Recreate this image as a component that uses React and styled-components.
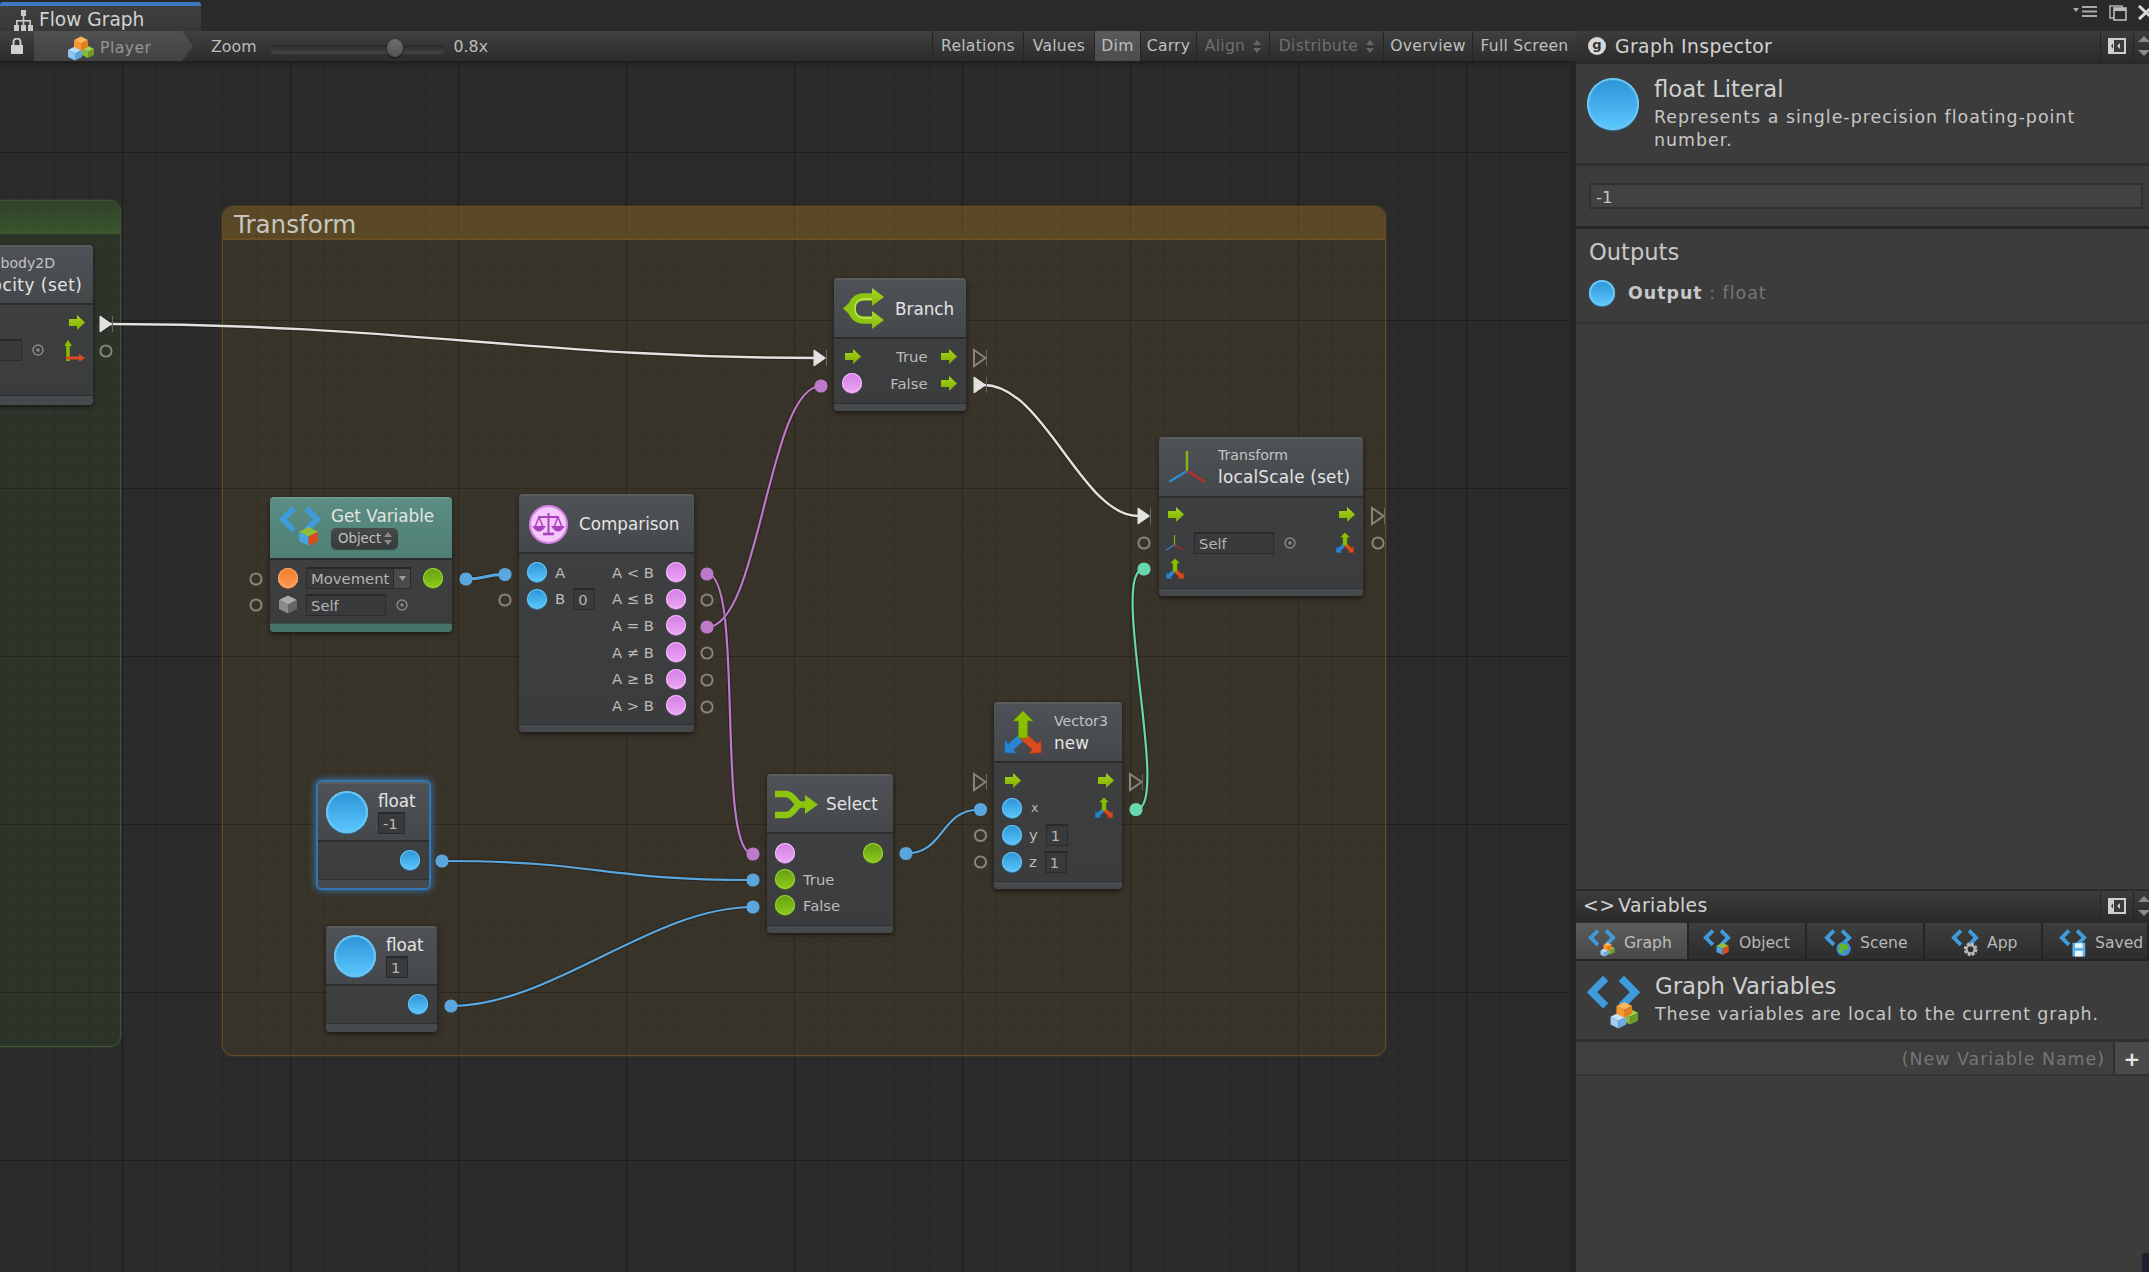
import React from "react";
import styled, { createGlobalStyle } from "styled-components";

const FONT = `"DejaVu Sans", "Liberation Sans", sans-serif`;
const CANVAS_TOP = 61;

const Global = createGlobalStyle`
  html, body { margin: 0; padding: 0; background: #2a2a2a; overflow: hidden; }
  * { box-sizing: border-box; }
  body { font-family: ${FONT}; }
`;

/* ---------- window chrome ---------- */
const Window = styled.div`
  width: 2149px; height: 1272px; display: flex; flex-direction: column; overflow: hidden; position: relative;
  font-family: ${FONT}; color: #c8c8c8;
`;
const TitleBar = styled.div`
  height: 31px; flex: none; display: flex; align-items: flex-end; justify-content: space-between;
  background: #2a2a2a;
`;
const TitleTab = styled.div`
  width: 201px; height: 29px; display: flex; align-items: center; gap: 6px; padding: 3px 0 0 14px;
  border-top: 4px solid #3d78c2; border-radius: 3px 3px 0 0;
  background: linear-gradient(180deg, #3f3f3f, #383838);
  font-size: 18.6px; color: #d2d2d2; line-height: 1;
`;
const WindowControls = styled.div`
  display: flex; align-items: flex-start; height: 31px; padding-top: 5px; margin-right: -6px; gap: 10px;
`;
const Main = styled.div` flex: 1; display: flex; min-height: 0; `;
const GraphColumn = styled.div` width: 1576px; flex: none; display: flex; flex-direction: column; `;

/* ---------- toolbar ---------- */
const Toolbar = styled.div`
  height: 30px; flex: none; display: flex; align-items: stretch;
  background: linear-gradient(180deg, #404040, #2c2c2c);
  font-size: 15.8px; color: #bcbcbc;
`;
const LockSlot = styled.div` width: 34px; flex: none; display: flex; align-items: center; padding-left: 10px; `;
const Breadcrumb = styled.div`
  width: 159px; flex: none; display: flex; align-items: center; gap: 6px; padding-left: 34px;
  background: linear-gradient(180deg, #505050, #424242);
  clip-path: polygon(0 0, 148px 0, 100% 50%, 148px 100%, 0 100%);
  color: #969696; font-size: 15.6px; letter-spacing: .5px; padding-top: 4px;
`;
const ToolLabel = styled.div` display: flex; align-items: center; margin-left: ${p => p.$ml}px; `;
const ZoomTrack = styled.div`
  width: 175px; height: 9px; margin: 14px 0 0 13px; flex: none; position: relative; border-radius: 5px;
  background: linear-gradient(180deg, #2a2a2a, #454545);
`;
const ZoomThumb = styled.div`
  position: absolute; left: 117px; top: -6px; width: 16px; height: 18px; border-radius: 50%;
  background: linear-gradient(180deg, #6e6e6e, #525252); box-shadow: 0 1px 2px rgba(0,0,0,.6);
`;
const ToolSpacer = styled.div` flex: 1; `;
const ToolButton = styled.div`
  width: ${p => p.$w}px; flex: none; display: flex; align-items: center; justify-content: center; gap: 8px;
  border-left: 1px solid #252525;
  color: ${p => (p.$disabled ? "#6f6f6f" : "#bfbfbf")};
  background: ${p => (p.$active ? "linear-gradient(180deg,#5a5a5a,#4c4c4c)" : "transparent")};
  font-size: 15.6px; letter-spacing: .25px;
`;

/* ---------- canvas ---------- */
const Canvas = styled.div`
  flex: 1; position: relative; overflow: hidden; border-right: 6px solid #242424;
  background-color: #2b2b2b;
  background-image:
    linear-gradient(90deg, rgba(0,0,0,.24) 1px, transparent 1px),
    linear-gradient(180deg, rgba(0,0,0,.24) 1px, transparent 1px),
    linear-gradient(90deg, rgba(0,0,0,.11) 1px, transparent 1px),
    linear-gradient(180deg, rgba(0,0,0,.11) 1px, transparent 1px);
  background-size: 168px 168px, 168px 168px, 16.8px 16.8px, 16.8px 16.8px;
  background-position: 122px 91px, 122px 91px, 122px 91px, 122px 91px;
  &::before { content: ""; position: absolute; inset: 0 0 auto 0; height: 6px; background: linear-gradient(180deg, rgba(0,0,0,.3), transparent); }
`;
const Group = styled.div`
  position: absolute; left: ${p => p.$x}px; top: ${p => p.$y - CANVAS_TOP}px;
  width: ${p => p.$w}px; height: ${p => p.$h}px; border-radius: 11px;
  background: ${p => (p.$green ? "rgba(80,180,50,.08)" : "rgba(190,140,40,.10)")};
  border: 1px solid ${p => (p.$green ? "#3d5532" : "#654d20")};
  box-shadow: 0 0 2px ${p => (p.$green ? "rgba(70,110,50,.7)" : "rgba(120,85,25,.7)")};
`;
const GroupHead = styled.div`
  height: 33px; padding: 3px 0 0 11px; border-radius: 10px 10px 0 0; display: flex; align-items: center;
  background: ${p => (p.$green
    ? "linear-gradient(180deg, rgba(90,180,50,.1), rgba(90,180,50,.25))"
    : "rgba(190,130,30,.25)")};
  border-bottom: 2px solid ${p => (p.$green ? "#3f5a33" : "#6b4f22")};
  font-size: 24.6px; color: #c6c6c0;
`;

const Node = styled.div`
  position: absolute; left: ${p => p.$x}px; top: ${p => p.$y - CANVAS_TOP}px; width: ${p => p.$w}px;
  display: flex; flex-direction: column; border-radius: 4px; overflow: hidden;
  background: #3d3f40;
  box-shadow: ${p => (p.$selected
    ? "0 0 0 2px #2f77b8, 0 0 7px 3px rgba(60,150,230,.6)"
    : "0 2px 5px rgba(0,0,0,.55)")};
`;
const NodeHead = styled.div`
  height: ${p => p.$h}px; flex: none; display: flex; align-items: center; gap: ${p => p.$gap ?? 10}px;
  padding-left: ${p => p.$pl ?? 8}px; padding-bottom: ${p => p.$pb ?? 0}px;
  background: ${p => (p.$teal ? "linear-gradient(180deg,#5b8d82,#4f7f74)" : "linear-gradient(180deg,#4e5256,#45484b)")};
  border-top: 2px solid ${p => (p.$teal ? "#6a978c" : "#5a5d60")};
  border-bottom: 2px solid #2b2c2d;
`;
const HeadStack = styled.div` display: flex; flex-direction: column; align-items: flex-start; gap: ${p => p.$gap ?? 4}px; white-space: nowrap; `;
const NodeTitle = styled.div`
  font-size: 16.8px; line-height: 20px; color: #e4e4e4; white-space: nowrap;
  letter-spacing: ${p => p.$ls ?? 0}px; font-weight: ${p => p.$weight ?? 400};
`;
const NodeKicker = styled.div` font-size: 14.1px; line-height: 18px; color: #c4c4c4; white-space: nowrap; `;
const NodeBody = styled.div`
  display: flex; flex-direction: column; gap: ${p => p.$gap ?? 0}px;
  padding: ${p => p.$pt ?? 4}px ${p => p.$pr ?? 9}px ${p => p.$pb ?? 6}px ${p => p.$pl ?? 8}px;
  background: linear-gradient(180deg, #3d3f40, #3b3c3d);
`;
const NodeFoot = styled.div`
  height: ${p => p.$h ?? 8}px; flex: none;
  background: ${p => (p.$teal ? "#467368" : "#474a4c")};
  border-top: 1px solid ${p => (p.$teal ? "#3b4f4b" : "#2f3031")};
`;
const Row = styled.div`
  height: ${p => p.$h ?? 27}px; display: flex; align-items: center; justify-content: ${p => p.$justify ?? "space-between"};
`;
const Cluster = styled.div` display: flex; align-items: center; gap: ${p => p.$gap ?? 8}px; margin-left: ${p => p.$ml ?? 0}px; `;
const Label = styled.span`
  font-size: ${p => p.$size ?? 14.8}px; color: #bbb; white-space: nowrap; letter-spacing: ${p => p.$ls ?? 0}px;
`;
const Field = styled.div`
  width: ${p => p.$w}px; height: ${p => p.$h ?? 22}px; flex: none; display: flex; align-items: center;
  padding-left: ${p => p.$pl ?? 4}px; position: relative;
  background: #393a3b; border: 1px solid #2b2b2b; border-top: 2px solid #292929;
  font-size: 14.8px; color: #b4b4b4; white-space: nowrap;
`;
const FieldDrop = styled.div`
  position: absolute; right: 0; top: 0; bottom: 0; width: 17px; background: #484a4b; display: flex; align-items: center; justify-content: center;
  border-left: 1px solid #2b2b2b;
`;
const HeadDropdown = styled.div`
  height: 21px; width: 67px; display: flex; align-items: center; gap: 3px; padding-left: 7px; border-radius: 5px;
  background: linear-gradient(180deg,#474a4a,#383a3a); box-shadow: 0 1px 1px rgba(0,0,0,.4);
  font-size: 13.3px; color: #c0c0c0;
`;
const tones = {
  blue: ["#2b93d6", "#5cc8ff", "#6cc6f2", "#2a7fb9"],
  purple: ["#d47ee3", "#eba6f4", "#eec0f6", "#a861b4"],
  green: ["#659f10", "#8ecb1d", "#9bd43a", "#4e7c10"],
  orange: ["#ef7b2d", "#ff9c50", "#ffb07a", "#c7662a"],
};
const Port = styled.span`
  width: ${p => p.$size ?? 20}px; height: ${p => p.$size ?? 20}px; flex: none; border-radius: 50%;
  background: linear-gradient(180deg, ${p => tones[p.$tone][0]}, ${p => tones[p.$tone][1]});
  box-shadow: inset 0 0 0 ${p => (p.$size ? 2 : 1)}px ${p => tones[p.$tone][2]}, 0 1px 0 ${p => tones[p.$tone][3]};
`;

/* ---------- sidebar ---------- */
const Sidebar = styled.aside` width: 573px; flex: none; display: flex; flex-direction: column; background: #3c3c3c; `;
const PanelHeader = styled.div`
  height: ${p => p.$h}px; flex: none; display: flex; align-items: center; justify-content: space-between;
  background: linear-gradient(180deg, #3c3c3c, #2c2c2c);
  font-size: 18.8px; color: #d2d2d2; letter-spacing: .4px;
  border-bottom: 3px solid #2a2a2a;
`;
const PanelTitle = styled.div` display: flex; align-items: center; gap: ${p => p.$gap}px; padding-left: ${p => p.$pl}px; white-space: nowrap; `;
const GBadge = styled.span`
  width: 18px; height: 18px; border-radius: 50%; background: #d8d8d8; color: #333; font-size: 13px; font-weight: 700;
  display: flex; align-items: center; justify-content: center; letter-spacing: 0; padding-bottom: 3px;
`;
const PanelActions = styled.div` display: flex; align-items: center; align-self: stretch; `;
const CollapseSlot = styled.div`
  width: 34px; display: flex; align-items: center; justify-content: center; border-left: 1px solid #252525; border-right: 1px solid #252525;
  align-self: stretch;
`;
const ArrowSlot = styled.div` width: 15px; display: flex; flex-direction: column; align-items: flex-start; justify-content: center; gap: 8px; padding-left: 4px; overflow: hidden; `;
const Intro = styled.div`
  height: ${p => p.$h}px; flex: none; display: flex; gap: 15px; padding: ${p => p.$pt}px 0 0 11px;
  border-bottom: 3px solid #2f2f2f;
`;
const IntroTitle = styled.div` font-size: ${p => p.$size}px; line-height: 28px; color: #cfcfcf; white-space: nowrap; margin: -3px 0 3px; `;
const IntroText = styled.div` font-size: 17.4px; line-height: 23px; color: #c6c6c6; letter-spacing: ${p => p.$ls ?? 1}px; white-space: nowrap; `;
const ValueSection = styled.div`
  height: 63px; flex: none; padding: 17px 6px 0 13px; border-bottom: 3px solid #242424;
`;
const ValueInput = styled.div`
  height: 26px; background: #424242; border: 2px solid #303030; display: flex; align-items: center; padding: 2px 0 0 5px; font-size: 16.6px; color: #c4c4c4;
`;
const OutputsSection = styled.div` height: 95px; flex: none; padding: 9px 0 0 13px; border-bottom: 3px solid #333; `;
const SectionTitle = styled.div` font-size: 22.6px; line-height: 28px; color: #c8c8c8; `;
const OutputRow = styled.div` display: flex; align-items: center; gap: 13px; margin-top: 14px; font-size: 17.4px; letter-spacing: 1px; `;
const OutputName = styled.b` color: #c8c8c8; font-weight: 700; `;
const OutputType = styled.span` color: #767676; `;
const Filler = styled.div` flex: 1; `;
const VarBlock = styled.div` height: 383px; flex: none; display: flex; flex-direction: column; border-top: 2px solid #2c2c2c; `;
const Tabs = styled.div` height: 38px; flex: none; display: flex; border-bottom: 2px solid #252525; `;
const Tab = styled.div`
  width: ${p => p.$w}px; flex: none; display: flex; align-items: center; gap: 8px; padding: 3px 0 0 ${p => p.$pl}px;
  background: ${p => (p.$active ? "linear-gradient(180deg,#5c5c5c,#484848)" : "linear-gradient(180deg,#3e3e3e,#2d2d2d)")};
  border-right: 2px solid #252525; font-size: 15.6px; color: ${p => (p.$active ? "#bebebe" : "#b8b8b8")};
  white-space: nowrap;
`;
const NewVarRow = styled.div` height: 34px; flex: none; display: flex; border-bottom: 2px solid #333; `;
const NewVarInput = styled.div`
  flex: 1; display: flex; align-items: center; justify-content: flex-end; padding: 2px 8px 0 0;
  background: #3f3f3f; font-size: 17.4px; letter-spacing: 1px; color: #767676;
`;
const AddButton = styled.div`
  width: 36px; flex: none; display: flex; align-items: center; justify-content: center; padding-top: 2px;
  background: #4a4a4a; border-left: 2px solid #2e2e2e; font-size: 20px; font-weight: 700; color: #e6e6e6;
`;
const CornerMark = styled.div`
  position: absolute; right: 0; bottom: 0; width: 7px; height: 19px; background: #1c2030; border-radius: 3px 0 0 0;
`;

/* ---------- icons ---------- */
const FlowArrow = ({ ml = 0 }) => (
  <svg width="16" height="15" viewBox="0 0 16 15" style={{ flex: "none", marginLeft: ml }}>
    <defs>
      <linearGradient id="fa" x1="0" y1="0" x2="0" y2="1"><stop offset="0" stopColor="#a8d41a" /><stop offset="1" stopColor="#7fb000" /></linearGradient>
    </defs>
    <polygon points="0,4 8,4 8,0 16,7.5 8,15 8,11 0,11" fill="url(#fa)" />
  </svg>
);
const Target = () => (
  <svg width="12" height="12" viewBox="0 0 12 12" style={{ flex: "none" }}>
    <circle cx="6" cy="6" r="5" fill="none" stroke="#8a8a8a" strokeWidth="1.4" />
    <circle cx="6" cy="6" r="1.7" fill="#8a8a8a" />
  </svg>
);
const UpDown = ({ color = "#8a8a8a" }) => (
  <svg width="8" height="13" viewBox="0 0 8 13" style={{ flex: "none" }}>
    <polygon points="4,0 8,5 0,5" fill={color} />
    <polygon points="0,8 8,8 4,13" fill={color} />
  </svg>
);
const Axes = ({ size = 38 }) => (
  <svg width={size} height={size * 0.84} viewBox="0 0 38 32" style={{ flex: "none" }}>
    <line x1="19" y1="20" x2="19" y2="0" stroke="#86b51a" strokeWidth="2.4" />
    <line x1="19" y1="20" x2="1" y2="31" stroke="#2b8fd0" strokeWidth="2.4" />
    <line x1="19" y1="20" x2="37" y2="31" stroke="#c32a2a" strokeWidth="2.4" />
  </svg>
);
const Vec3 = ({ w = 42, h = 44 }) => (
  <svg width={w} height={h} viewBox="0 0 42 44" style={{ flex: "none" }}>
    <g transform="rotate(-132 21 25)">
      <polygon points="21,0 30,9 25,9 25,25 17,25 17,9 12,9" fill="#2b84cf" stroke="#1c5f9a" strokeWidth=".6" />
    </g>
    <g transform="rotate(132 21 25)">
      <polygon points="21,0 30,9 25,9 25,25 17,25 17,9 12,9" fill="#dc4a1f" stroke="#a33414" strokeWidth=".6" />
    </g>
    <polygon points="21,0 31,10 25.5,10 25.5,27 16.5,27 16.5,10 11,10" fill="#88c000" stroke="#5f8a00" strokeWidth=".6" />
  </svg>
);
const Axis2 = () => (
  <svg width="20" height="21" viewBox="0 0 20 21" style={{ flex: "none" }}>
    <polyline points="3,21 3,4" fill="none" stroke="#88c000" strokeWidth="3.4" />
    <polygon points="3,0 7,6 -1,6" fill="#88c000" />
    <polyline points="1,18 15,18" fill="none" stroke="#dc4a1f" strokeWidth="3" />
    <polygon points="20,18 14,14 14,22" fill="#dc4a1f" />
  </svg>
);
const IsoCube = ({ cx, cy, s, top, left, right }) => (
  <g>
    <polygon points={`${cx},${cy - s * 0.5} ${cx + s},${cy} ${cx},${cy + s * 0.5} ${cx - s},${cy}`} fill={top} />
    <polygon points={`${cx - s},${cy} ${cx},${cy + s * 0.5} ${cx},${cy + s * 1.5} ${cx - s},${cy + s}`} fill={left} />
    <polygon points={`${cx + s},${cy} ${cx},${cy + s * 0.5} ${cx},${cy + s * 1.5} ${cx + s},${cy + s}`} fill={right} />
  </g>
);
const StackedCubes = ({ size = 26 }) => (
  <svg width={size} height={size} viewBox="0 0 26 26" style={{ flex: "none" }}>
    <IsoCube cx={20} cy={14} s={6} top="#a6cf55" left="#8ab93a" right="#6f9b2a" />
    <IsoCube cx={7} cy={15} s={7} top="#b4dcfb" left="#8cc4f2" right="#5fa4de" />
    <IsoCube cx={13} cy={5} s={7} top="#ffb45a" left="#f8992f" right="#e27f1a" />
  </svg>
);
const GrayCube = () => (
  <svg width="20" height="22" viewBox="0 0 20 22" style={{ flex: "none" }}>
    <IsoCube cx={10} cy={6} s={9} top="#a9a9a9" left="#8a8a8a" right="#666" />
  </svg>
);
const overlays = {
  cubes: (
    <g>
      <IsoCube cx={44} cy={38} s={8} top="#a6cf55" left="#8ab93a" right="#6f9b2a" />
      <IsoCube cx={32} cy={42} s={8} top="#c4e2fb" left="#9fcdf3" right="#6faee3" />
      <IsoCube cx={38} cy={31} s={8} top="#ffb45a" left="#f8992f" right="#e27f1a" />
    </g>
  ),
  object: <IsoCube cx={38} cy={33} s={12} top="#8fbf3a" left="#4aa3df" right="#d84b1f" />,
  scene: (
    <g>
      <circle cx="38" cy="39" r="14" fill="#3d8fd8" />
      <path d="M30 30 Q40 26 48 34 L44 42 L36 40 L38 50 L28 44 Z" fill="#67b52f" />
    </g>
  ),
  gear: (
    <g>
      <circle cx="38" cy="40" r="10" fill="none" stroke="#b9b9b9" strokeWidth="7" strokeDasharray="5 2.8" />
      <circle cx="38" cy="40" r="8" fill="none" stroke="#b9b9b9" strokeWidth="4" />
    </g>
  ),
  floppy: (
    <g>
      <rect x="26" y="27" width="25" height="27" fill="#5fb4ee" />
      <rect x="31" y="28" width="15" height="9" fill="#eaf4fb" />
      <rect x="31" y="43" width="15" height="11" fill="#eaf4fb" />
    </g>
  ),
};
const VarIcon = ({ w, h, overlay }) => (
  <svg width={w} height={h} viewBox="0 0 54 55" style={{ flex: "none" }}>
    <polyline points="19,3 5,17 19,31" fill="none" stroke="#3f9cdc" strokeWidth="7.5" />
    <polyline points="35,3 49,17 35,31" fill="none" stroke="#3f9cdc" strokeWidth="7.5" />
    {overlays[overlay]}
  </svg>
);
const BranchIcon = () => (
  <svg width="41" height="41" viewBox="0 0 41 41" style={{ flex: "none" }}>
    <defs>
      <linearGradient id="bi" x1="0" y1="0" x2="0" y2="1"><stop offset="0" stopColor="#a8d824" /><stop offset="1" stopColor="#84bb08" /></linearGradient>
    </defs>
    <path d="M9 20.5 C9 13 14 9 21 9 L31 9 M9 20.5 C9 28 14 32 21 32 L31 32" fill="none" stroke="#8cc40e" strokeWidth="7.5" />
    <polygon points="0,20.5 7,14 13,14 13,27 7,27" fill="#8cc40e" />
    <path d="M12 20.5 C12 14 16 11 21 11 L30 11 M12 20.5 C12 27 16 30 21 30 L30 30" fill="none" stroke="#c3e66a" strokeWidth="1.4" />
    <polygon points="29,0 41,9 29,18" fill="url(#bi)" />
    <polygon points="29,23 41,32 29,41" fill="url(#bi)" />
  </svg>
);
const SelectIcon = () => (
  <svg width="43" height="29" viewBox="0 0 43 29" style={{ flex: "none" }}>
    <path d="M0 4 L11 4 C19 4 20 14.5 26 14.5 L32 14.5 M0 25 L11 25 C19 25 20 14.5 26 14.5" fill="none" stroke="#8cc40e" strokeWidth="6.6" />
    <polygon points="30,5 43,14.5 30,24" fill="#8cc40e" />
  </svg>
);
const ScalesIcon = () => (
  <svg width="39" height="39" viewBox="0 0 39 39" style={{ flex: "none" }}>
    <circle cx="19.5" cy="19.5" r="18.5" fill="#f4c8fa" stroke="#d681e6" strokeWidth="2" />
    <g fill="none" stroke="#ab42bf" strokeWidth="2">
      <line x1="19.5" y1="8" x2="19.5" y2="29" />
      <line x1="9" y1="12" x2="30" y2="12" />
      <line x1="14" y1="29" x2="25" y2="29" strokeWidth="2.6" />
      <path d="M10 12 L6 22 M10 12 L14 22 M29 12 L25 22 M29 12 L33 22" strokeWidth="1.5" />
      <path d="M5 22 Q10 29 15 22 Z M24 22 Q29 29 34 22 Z" fill="#ab42bf" />
    </g>
  </svg>
);
const LockIcon = () => (
  <svg width="14" height="16" viewBox="0 0 14 16">
    <path d="M3.5 7 V4 a3.5 3.5 0 0 1 7 0 V7" fill="none" stroke="#c8c8c8" strokeWidth="2" />
    <rect x="1" y="7" width="12" height="9" fill="#d0d0d0" />
  </svg>
);
const HierarchyIcon = () => (
  <svg width="19" height="21" viewBox="0 0 19 21" style={{ flex: "none" }}>
    <rect x="7" y="0" width="5" height="6" fill="#c8c8c8" />
    <rect x="8.7" y="6" width="1.6" height="5" fill="#c8c8c8" />
    <rect x="2" y="10" width="15" height="1.6" fill="#c8c8c8" />
    <rect x="2" y="11" width="1.6" height="4" fill="#c8c8c8" />
    <rect x="15.4" y="11" width="1.6" height="4" fill="#c8c8c8" />
    <rect x="8.7" y="11" width="1.6" height="4" fill="#c8c8c8" />
    <rect x="0" y="15" width="5" height="6" fill="#c8c8c8" />
    <rect x="7" y="15" width="5" height="6" fill="#c8c8c8" />
    <rect x="14" y="15" width="5" height="6" fill="#c8c8c8" />
  </svg>
);
const MenuIcon = () => (
  <svg width="26" height="14" viewBox="0 0 26 14" style={{ marginRight: 0 }}>
    <polygon points="0,3 6,3 3,7" fill="#aaa" />
    <g fill="#aaa"><rect x="9" y="1" width="15" height="2" /><rect x="9" y="5.5" width="15" height="2" /><rect x="9" y="10" width="15" height="2" /></g>
  </svg>
);
const WinIcon = () => (
  <svg width="18" height="16" viewBox="0 0 18 16">
    <rect x="1" y="1" width="12" height="12" fill="#2a2a2a" stroke="#aaa" strokeWidth="1.6" />
    <rect x="5" y="3" width="12" height="12" fill="#2a2a2a" stroke="#bbb" strokeWidth="1.6" />
    <rect x="5" y="3" width="12" height="3" fill="#bbb" />
  </svg>
);
const CloseIcon = () => (
  <svg width="18" height="15" viewBox="0 0 18 15">
    <path d="M2 1 L16 14 M16 1 L2 14" stroke="#d8d8d8" strokeWidth="3" />
  </svg>
);
const CollapseIcon = () => (
  <svg width="18" height="16" viewBox="0 0 18 16">
    <rect x="0" y="0" width="18" height="16" fill="#cfcfcf" />
    <rect x="6" y="2" width="10" height="12" fill="#3a3a3a" />
    <polygon points="3,8 5,5.5 5,10.5" fill="#3a3a3a" />
    <polygon points="9,8 12,5 12,11" fill="#cfcfcf" />
  </svg>
);
const SmallTri = ({ flip }) => (
  <svg width="12" height="6" viewBox="0 0 12 6" style={{ flex: "none" }}>
    <polygon points={flip ? "0,0 12,0 6,6" : "6,0 12,6 0,6"} fill="#8a8a8a" />
  </svg>
);

/* ---------- wires, as a drawing over the canvas ---------- */
const WireLayer = styled.svg` position: absolute; left: 0; top: 0; pointer-events: none; `;
const BLUE = "#5ba7dd"; const PURPLE = "#bd7acb"; const TEAL = "#68d6ae"; const WHITE = "#e2e2e0"; const RING = "#89847b";
const Wire = ({ d, c, w = 2.2 }) => (
  <>
    <path d={d} fill="none" stroke="rgba(0,0,0,.28)" strokeWidth={w + 2} />
    <path d={d} fill="none" stroke={c} strokeWidth={w} />
  </>
);
const Dot = ({ x, y, c }) => <circle cx={x} cy={y} r="6.6" fill={c} />;
const Ring = ({ x, y }) => <circle cx={x} cy={y} r="5.6" fill="none" stroke={RING} strokeWidth="2" />;
const Tri = ({ x, y, solid }) => (
  <>
    <polygon points={`${x - 6},${y - 8} ${x + 5.5},${y} ${x - 6},${y + 8}`} fill={solid ? WHITE : "none"} stroke={solid ? WHITE : RING} strokeWidth={solid ? 1 : 2} />
    <line x1={x + 6.5} y1={y - 8} x2={x + 6.5} y2={y + 8} stroke="#6b675f" strokeWidth="1" />
  </>
);

const Wires = () => (
  <WireLayer width="1570" height="1211" viewBox={`0 ${CANVAS_TOP} 1570 1211`}>
    <Wire d="M110 324 C400 324 540 358 818 358" c={WHITE} w={2.4} />
    <Wire d="M984 385 C1044 385 1082 516 1138 516" c={WHITE} w={2.4} />
    <Wire d="M707 574 C745 574 715 854 753 854" c={PURPLE} />
    <Wire d="M707 627 C760 627 768 386 821 386" c={PURPLE} />
    <Wire d="M466 579 C488 579 483 574.5 505 574.5" c={BLUE} w={3} />
    <Wire d="M442 861 C600 861 600 880 753 880" c={BLUE} />
    <Wire d="M451 1006 C552 1006 652 907 753 907" c={BLUE} />
    <Wire d="M906 853.5 C945 853.5 940 809.5 980 809.5" c={BLUE} />
    <Wire d="M1136 809.5 C1172 809.5 1108 569 1144 569" c={TEAL} />

    <Tri x={106} y={324} solid />
    <Ring x={106} y={351} />
    <Ring x={256} y={579} /><Ring x={256} y={605} />
    <Dot x={466} y={579} c={BLUE} />
    <Dot x={505} y={574.5} c={BLUE} /><Ring x={505} y={600} />
    <Dot x={707} y={574} c={PURPLE} /><Ring x={707} y={600} />
    <Dot x={707} y={627} c={PURPLE} /><Ring x={707} y={653} />
    <Ring x={707} y={680} /><Ring x={707} y={707} />
    <Tri x={820} y={358} solid /><Dot x={821} y={386} c={PURPLE} />
    <Tri x={980} y={358} /><Tri x={980} y={385} solid />
    <Tri x={1144} y={516} solid /><Ring x={1144} y={543} /><Dot x={1144} y={569} c={TEAL} />
    <Tri x={1378} y={516} /><Ring x={1378} y={543} />
    <Dot x={442} y={861} c={BLUE} /><Dot x={451} y={1006} c={BLUE} />
    <Dot x={753} y={854} c={PURPLE} /><Dot x={753} y={880} c={BLUE} /><Dot x={753} y={907} c={BLUE} />
    <Dot x={906} y={853.5} c={BLUE} />
    <Tri x={980} y={782} /><Dot x={980.5} y={809.5} c={BLUE} />
    <Ring x={980.5} y={835.5} /><Ring x={980.5} y={862} />
    <Tri x={1136} y={782} /><Dot x={1136} y={809.5} c={TEAL} />
  </WireLayer>
);

const comparisons = ["A < B", "A ≤ B", "A = B", "A ≠ B", "A ≥ B", "A > B"];
const tools = [
  { t: "Relations", w: 91 }, { t: "Values", w: 71 }, { t: "Dim", w: 46, active: true }, { t: "Carry", w: 56 },
  { t: "Align", w: 73, disabled: true, arrows: true }, { t: "Distribute", w: 114, disabled: true, arrows: true },
  { t: "Overview", w: 89 }, { t: "Full Screen", w: 104 },
];
const varTabs = [
  { t: "Graph", w: 113, pl: 12, o: "cubes", active: true }, { t: "Object", w: 118, pl: 14, o: "object" },
  { t: "Scene", w: 118, pl: 17, o: "scene" }, { t: "App", w: 118, pl: 26, o: "gear" }, { t: "Saved", w: 106, pl: 16, o: "floppy" },
];

const FloatNode = ({ x, y, value, fieldW, selected }) => (
  <Node $x={x} $y={y} $w={111} $selected={selected}>
    <NodeHead $h={60} $pl={8} $gap={10}>
      <Port $tone="blue" $size={42} />
      <HeadStack $gap={1}>
        <NodeTitle>float</NodeTitle>
        <Field $w={fieldW}>{value}</Field>
      </HeadStack>
    </NodeHead>
    <NodeBody $pt={4} $pb={5} $pr={9}>
      <Row $justify="flex-end" $h={28}><Port $tone="blue" /></Row>
    </NodeBody>
    <NodeFoot $h={9} />
  </Node>
);

export default function App() {
  return (
    <Window>
      <Global />
      <TitleBar>
        <TitleTab><HierarchyIcon />Flow Graph</TitleTab>
        <WindowControls><MenuIcon /><WinIcon /><CloseIcon /></WindowControls>
      </TitleBar>
      <Main>
        <GraphColumn>
          <Toolbar>
            <LockSlot><LockIcon /></LockSlot>
            <Breadcrumb><StackedCubes />Player</Breadcrumb>
            <ToolLabel $ml={18}>Zoom</ToolLabel>
            <ZoomTrack><ZoomThumb /></ZoomTrack>
            <ToolLabel $ml={9}>0.8x</ToolLabel>
            <ToolSpacer />
            {tools.map(b => (
              <ToolButton key={b.t} $w={b.w} $active={b.active} $disabled={b.disabled}>
                {b.t}{b.arrows && <UpDown color="#666" />}
              </ToolButton>
            ))}
          </Toolbar>
          <Canvas>
            <Group $green $x={-400} $y={200} $w={521} $h={847}><GroupHead $green /></Group>
            <Group $x={222} $y={206} $w={1164} $h={850}><GroupHead>Transform</GroupHead></Group>

            <Node $x={-120} $y={245} $w={213}>
              <NodeHead $h={60} $pl={85} $pb={2}>
                <HeadStack $gap={3}>
                  <NodeKicker>Rigidbody2D</NodeKicker>
                  <NodeTitle $ls={.55}>velocity (set)</NodeTitle>
                </HeadStack>
              </NodeHead>
              <NodeBody $pt={4} $pb={6} $pr={8}>
                <Row $h={26} $justify="flex-end"><FlowArrow /></Row>
                <Row $h={30} $justify="flex-end">
                  <Cluster $gap={10}><Field $w={80} /><Target /></Cluster>
                  <Cluster $ml={21}><Axis2 /></Cluster>
                </Row>
                <Row $h={24} />
              </NodeBody>
              <NodeFoot $h={10} />
            </Node>

            <Node $x={270} $y={497} $w={182}>
              <NodeHead $teal $h={63} $pl={8} $gap={9} $pb={2}>
                <VarIcon w={44} h={43} overlay="object" />
                <HeadStack $gap={2}>
                  <NodeTitle>Get Variable</NodeTitle>
                  <HeadDropdown>Object<UpDown /></HeadDropdown>
                </HeadStack>
              </NodeHead>
              <NodeBody $pt={7} $pb={7} $gap={5}>
                <Row $h={22}>
                  <Cluster>
                    <Port $tone="orange" />
                    <Field $w={105}>Movement<FieldDrop><svg width="7" height="5" viewBox="0 0 7 5"><polygon points="0,0 7,0 3.5,5" fill="#9a9a9a" /></svg></FieldDrop></Field>
                  </Cluster>
                  <Port $tone="green" />
                </Row>
                <Row $h={22} $justify="flex-start">
                  <Cluster><GrayCube /><Field $w={80}>Self</Field></Cluster>
                  <Cluster $ml={10}><Target /></Cluster>
                </Row>
              </NodeBody>
              <NodeFoot $teal $h={9} />
            </Node>

            <Node $x={519} $y={494} $w={175}>
              <NodeHead $h={60} $pl={10} $gap={11}>
                <ScalesIcon />
                <NodeTitle>Comparison</NodeTitle>
              </NodeHead>
              <NodeBody $pt={5} $pb={5} $pr={8}>
                {comparisons.map((c, i) => (
                  <Row key={c} $h={26.6}>
                    <Cluster>
                      {i < 2 && <Port $tone="blue" />}
                      {i < 2 && <Label>{i === 0 ? "A" : "B"}</Label>}
                      {i === 1 && <Field $w={22} $pl={4}>0</Field>}
                    </Cluster>
                    <Cluster $gap={12}><Label>{c}</Label><Port $tone="purple" /></Cluster>
                  </Row>
                ))}
              </NodeBody>
              <NodeFoot />
            </Node>

            <Node $x={834} $y={278} $w={132}>
              <NodeHead $h={61} $pl={9} $gap={11}>
                <BranchIcon />
                <NodeTitle>Branch</NodeTitle>
              </NodeHead>
              <NodeBody $pt={4.5} $pb={6} $pr={9.5}>
                <Row $h={26.5}>
                  <FlowArrow ml={3} />
                  <Cluster $gap={13}><Label>True</Label><FlowArrow /></Cluster>
                </Row>
                <Row $h={26.5}>
                  <Port $tone="purple" />
                  <Cluster $gap={13}><Label>False</Label><FlowArrow /></Cluster>
                </Row>
              </NodeBody>
              <NodeFoot />
            </Node>

            <Node $x={1159} $y={437} $w={204}>
              <NodeHead $h={61} $pl={9} $gap={12} $pb={2}>
                <Axes />
                <HeadStack $gap={3}>
                  <NodeKicker>Transform</NodeKicker>
                  <NodeTitle $ls={.25}>localScale (set)</NodeTitle>
                </HeadStack>
              </NodeHead>
              <NodeBody $pt={2} $pb={7} $pr={8} $pl={6}>
                <Row $h={28}><FlowArrow ml={3} /><FlowArrow /></Row>
                <Row $h={29}>
                  <Cluster $gap={10}><Axes size={19} /><Field $w={80}>Self</Field><Cluster $ml={0}><Target /></Cluster></Cluster>
                  <Vec3 w={20} h={22} />
                </Row>
                <Row $h={24} $justify="flex-start"><Vec3 w={20} h={22} /></Row>
              </NodeBody>
              <NodeFoot />
            </Node>

            <Node $x={767} $y={774} $w={126}>
              <NodeHead $h={60} $pl={8} $gap={8}>
                <SelectIcon />
                <NodeTitle>Select</NodeTitle>
              </NodeHead>
              <NodeBody $pt={6} $pb={7} $pl={8} $pr={10}>
                <Row $h={26}><Port $tone="purple" /><Port $tone="green" /></Row>
                <Row $h={26} $justify="flex-start"><Cluster><Port $tone="green" /><Label>True</Label></Cluster></Row>
                <Row $h={26} $justify="flex-start"><Cluster><Port $tone="green" /><Label>False</Label></Cluster></Row>
              </NodeBody>
              <NodeFoot />
            </Node>

            <Node $x={994} $y={702} $w={128}>
              <NodeHead $h={61} $pl={8} $gap={10}>
                <Vec3 />
                <HeadStack $gap={3}>
                  <NodeKicker>Vector3</NodeKicker>
                  <NodeTitle $ls={.1}>new</NodeTitle>
                </HeadStack>
              </NodeHead>
              <NodeBody $pt={4} $pb={6} $pl={8} $pr={8}>
                <Row $h={27}><FlowArrow ml={3} /><FlowArrow /></Row>
                <Row $h={27}><Cluster $gap={9}><Port $tone="blue" /><Label $size={12.5}>x</Label></Cluster><Vec3 w={20} h={22} /></Row>
                <Row $h={27} $justify="flex-start"><Cluster $gap={7}><Port $tone="blue" /><Label $ls={1}>y</Label><Field $w={22}>1</Field></Cluster></Row>
                <Row $h={27} $justify="flex-start"><Cluster $gap={7}><Port $tone="blue" /><Label $ls={1}>z</Label><Field $w={22}>1</Field></Cluster></Row>
              </NodeBody>
              <NodeFoot />
            </Node>

            <FloatNode x={318} y={782} value="-1" fieldW={27} selected />
            <FloatNode x={326} y={926} value="1" fieldW={22} />

            <Wires />
          </Canvas>
        </GraphColumn>

        <Sidebar>
          <PanelHeader $h={33}>
            <PanelTitle $pl={12} $gap={9}><GBadge>g</GBadge>Graph Inspector</PanelTitle>
            <PanelActions>
              <CollapseSlot><CollapseIcon /></CollapseSlot>
              <ArrowSlot><SmallTri /><SmallTri flip /></ArrowSlot>
            </PanelActions>
          </PanelHeader>
          <Intro $h={102} $pt={14}>
            <Port $tone="blue" $size={52} />
            <div>
              <IntroTitle $size={22.7}>float Literal</IntroTitle>
              <IntroText>Represents a single-precision floating-point<br />number.</IntroText>
            </div>
          </Intro>
          <ValueSection><ValueInput>-1</ValueInput></ValueSection>
          <OutputsSection>
            <SectionTitle>Outputs</SectionTitle>
            <OutputRow>
              <Port $tone="blue" $size={26} />
              <span><OutputName>Output</OutputName> <OutputType>: float</OutputType></span>
            </OutputRow>
          </OutputsSection>
          <Filler />
          <VarBlock>
            <PanelHeader $h={32}>
              <PanelTitle $pl={7} $gap={3}><span>&lt;&gt;</span>Variables</PanelTitle>
              <PanelActions>
                <CollapseSlot><CollapseIcon /></CollapseSlot>
                <ArrowSlot><SmallTri /><SmallTri flip /></ArrowSlot>
              </PanelActions>
            </PanelHeader>
            <Tabs>
              {varTabs.map(t => (
                <Tab key={t.t} $w={t.w} $pl={t.pl} $active={t.active}>
                  <VarIcon w={28} h={28} overlay={t.o} />{t.t}
                </Tab>
              ))}
            </Tabs>
            <Intro $h={81} $pt={14}>
              <VarIcon w={53} h={55} overlay="cubes" />
              <div>
                <IntroTitle $size={22.8}>Graph Variables</IntroTitle>
                <IntroText $ls={.85}>These variables are local to the current graph.</IntroText>
              </div>
            </Intro>
            <NewVarRow>
              <NewVarInput>(New Variable Name)</NewVarInput>
              <AddButton>+</AddButton>
            </NewVarRow>
          </VarBlock>
        </Sidebar>
      </Main>
      <CornerMark />
    </Window>
  );
}
